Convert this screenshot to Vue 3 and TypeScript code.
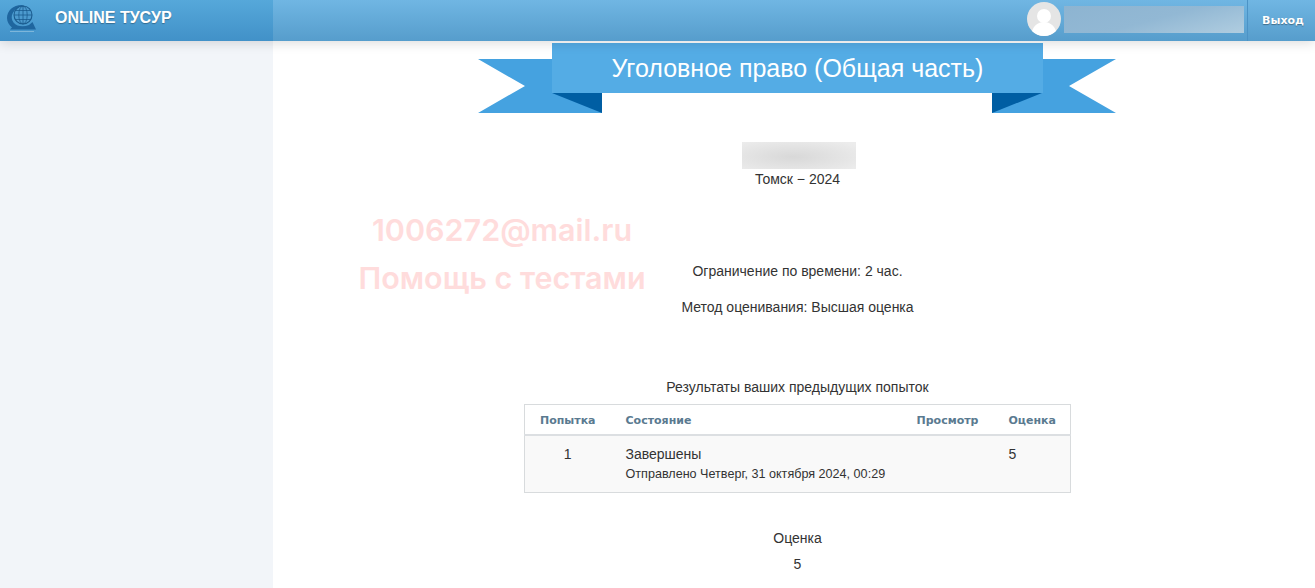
<script setup lang="ts">
const title = 'Уголовное право (Общая часть)'
</script>

<template>
  <div class="page">
    <header class="topbar">
      <div class="brand">
        <svg class="logo" width="40" height="36" viewBox="0 0 40 36" fill="none">
          <path d="M24 5C14 4 7 10 7 18c0 4 2 7 5 9.500l-2 2h26l-3.500-7.500-3.500 3c-6 2.500-12 1.500-15.500-2.500C9.500 17 12 9 24 5Z" fill="#1f669f"/>
          <path d="M10 31.500h24" stroke="#7db6da" stroke-width="1"/>
          <circle cx="23" cy="15" r="9" fill="#4c9ace" stroke="#1b5c8f" stroke-width="1.100"/>
          <ellipse cx="23" cy="15" rx="4.200" ry="9" stroke="#1b5c8f" stroke-width=".8"/>
          <path d="M14 15h18M15.500 10.500h15M15.500 19.500h15M23 6v18" stroke="#1b5c8f" stroke-width=".8"/>
        </svg>
        <span class="brand-name">ONLINE ТУСУР</span>
      </div>
      <div class="bar-right">
        <div class="avatar">
          <svg width="34" height="34" viewBox="0 0 34 34">
            <circle cx="17" cy="17" r="17" fill="#e5e5e5"/>
            <circle cx="17" cy="14" r="7" fill="#fff"/>
            <path d="M5 29c2-6 7-9 12-9s10 3 12 9a17 17 0 0 1-24 0Z" fill="#fff"/>
          </svg>
        </div>
        <div class="name-blur"></div>
        <div class="logout">Выход</div>
      </div>
    </header>

    <div class="body">
      <aside class="sidebar"></aside>
      <main class="main">
        <div class="ribbon">
          <svg class="ribbon-art" width="638" height="54" viewBox="0 0 638 54">
            <polygon points="0,0 124,0 124,54 0,54 47,27" fill="#45a2e0"/>
            <polygon points="638,0 514,0 514,54 638,54 591,27" fill="#45a2e0"/>
            <polygon points="74,34 124,34 124,54" fill="#005ea3"/>
            <polygon points="564,34 514,34 514,54" fill="#005ea3"/>
          </svg>
          <h1 class="ribbon-title">{{ title }}</h1>
        </div>

        <div class="author-blur"></div>
        <p class="city">Томск − 2024</p>

        <p class="limit">Ограничение по времени: 2 час.</p>
        <p class="method">Метод оценивания: Высшая оценка</p>

        <p class="caption">Результаты ваших предыдущих попыток</p>
        <table class="attempts">
          <thead>
            <tr>
              <th class="c-num">Попытка</th>
              <th class="c-state">Состояние</th>
              <th class="c-view">Просмотр</th>
              <th class="c-grade">Оценка</th>
            </tr>
          </thead>
          <tbody>
            <tr>
              <td class="c-num">1</td>
              <td class="c-state">
                <div>Завершены</div>
                <div class="sent">Отправлено Четверг, 31 октября 2024, 00:29</div>
              </td>
              <td class="c-view"></td>
              <td class="c-grade">5</td>
            </tr>
          </tbody>
        </table>

        <p class="grade-label">Оценка</p>
        <p class="grade-value">5</p>

        <div class="watermark">
          <div class="wm-mail">1006272@mail.ru</div>
          <div class="wm-help">Помощь с тестами</div>
        </div>
      </main>
    </div>
  </div>
</template>

<style>
html, body { margin: 0; padding: 0; background: #fff; overflow: hidden; }
</style>

<style scoped>
.page {
  height: 588px;
  overflow: hidden;
  display: flex;
  flex-direction: column;
  font-family: "Liberation Sans", Arial, sans-serif;
  font-size: 14px;
  color: #333;
}
.topbar {
  height: 41px;
  flex: none;
  display: flex;
  position: relative;
  z-index: 2;
  box-shadow: 0 1px 12px rgba(0, 0, 0, 0.16);
}
.brand {
  width: 273px;
  display: flex;
  align-items: flex-start;
  background: linear-gradient(#56a8da, #4191c8);
}
.logo { flex: none; }
.brand-name {
  margin: 9px 0 0 15px;
  font-size: 16px;
  line-height: 17px;
  font-weight: 700;
  color: #fff;
  text-shadow: 0 1px 1px rgba(0, 0, 0, 0.3);
}
.bar-right {
  flex: 1;
  display: flex;
  align-items: flex-start;
  justify-content: flex-end;
  background: linear-gradient(#70b6e3, #569dcc);
}
.avatar { width: 34px; height: 34px; margin-top: 2px; }
.name-blur {
  width: 180px;
  height: 27px;
  margin: 6px 3px 0 3px;
  background: linear-gradient(165deg, #8db4d1, #92b8d4 50%, #b0cde0);
}
.logout {
  width: 68px;
  height: 41px;
  box-sizing: border-box;
  border-left: 1px solid #4c93c6;
  padding-left: 3px;
  text-align: center;
  font-family: "DejaVu Sans", Verdana, sans-serif;
  font-size: 11px;
  font-weight: 700;
  line-height: 42px;
  color: #fff;
  text-shadow: 0 1px 1px rgba(0, 0, 0, 0.35);
}
.body { flex: 1; display: flex; min-height: 0; }
.sidebar { width: 273px; flex: none; background: #f2f5f9; }
.main {
  flex: 1;
  position: relative;
  padding-left: 7px;
  display: flex;
  flex-direction: column;
  align-items: center;
  text-align: center;
}
.main p { margin: 0; line-height: 20px; }
.ribbon {
  position: relative;
  width: 491px;
  height: 50px;
  margin-top: 2px;
  flex: none;
}
.ribbon-art { position: absolute; left: -74px; top: 16px; }
.ribbon-title {
  position: relative;
  margin: 0;
  height: 50px;
  background: #54ace5;
  color: #fff;
  font-size: 25px;
  font-weight: 400;
  line-height: 50px;
  text-align: center;
}
.author-blur {
  width: 114px;
  height: 27px;
  margin-top: 49px;
  margin-left: 2px;
  flex: none;
  background: radial-gradient(ellipse at 45% 55%, #d8d8d8, #ececec 90%);
}
.main .city { margin-top: 0; line-height: 20px; }
.main .limit { margin-top: 72px; }
.main .method { margin-top: 16px; }
.main .caption { margin-top: 60px; margin-bottom: 7px; }
.attempts {
  width: 547px;
  flex: none;
  border-collapse: collapse;
  border: 1px solid #d8dbdd;
  text-align: left;
}
.attempts th {
  height: 30px;
  padding: 2px 0 0;
  box-sizing: border-box;
  font-family: "DejaVu Sans", Verdana, sans-serif;
  font-size: 11px;
  font-weight: 700;
  color: #5a7a90;
  border-bottom: 2px solid #dcdfe2;
  vertical-align: middle;
}
.attempts td {
  height: 58px;
  padding: 8px 0 0;
  box-sizing: border-box;
  background: #f9f9f9;
  line-height: 20px;
  vertical-align: top;
}
.c-num { width: 86px; }
.attempts .c-num { text-align: center; }
.attempts .c-state { width: 306px; padding-left: 15px; }
.c-view { width: 92px; }
.sent { font-size: 12.6px; line-height: 21px; }
.main .grade-label { margin-top: 35px; }
.main .grade-value { margin-top: 6px; }
.watermark {
  position: absolute;
  left: 85px;
  top: 166px;
  width: 288px;
  font-family: Inter, "Liberation Sans", sans-serif;
  font-weight: 600;
  color: #ffdcdc;
  text-align: center;
  white-space: nowrap;
  line-height: 46px;
  pointer-events: none;
}
.wm-mail { font-size: 30.5px; height: 48px; }
.wm-help { font-size: 30.5px; }
</style>
